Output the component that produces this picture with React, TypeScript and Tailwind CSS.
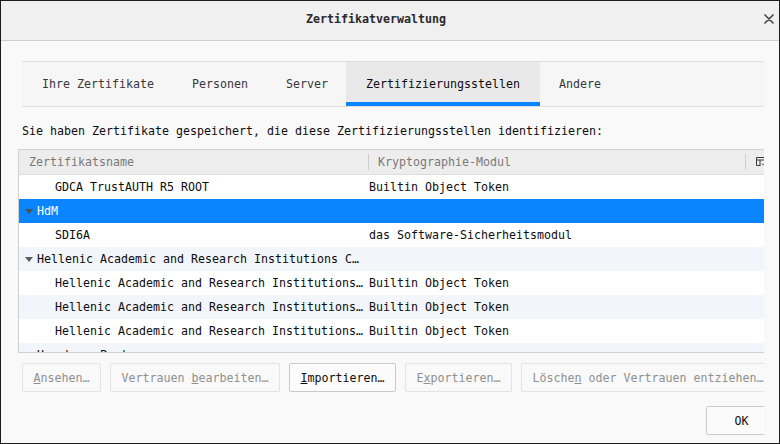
import type { ReactNode } from 'react';

type TreeRow = {
    name: string;
    module?: string;
    parent?: boolean;
    selected?: boolean;
};

const tabs = ['Ihre Zertifikate', 'Personen', 'Server', 'Zertifizierungsstellen', 'Andere'];

const rows: TreeRow[] = [
    { name: 'GDCA TrustAUTH R5 ROOT', module: 'Builtin Object Token' },
    { name: 'HdM', parent: true, selected: true },
    { name: 'SDI6A', module: 'das Software-Sicherheitsmodul' },
    { name: 'Hellenic Academic and Research Institutions C…', parent: true },
    { name: 'Hellenic Academic and Research Institutions…', module: 'Builtin Object Token' },
    { name: 'Hellenic Academic and Research Institutions…', module: 'Builtin Object Token' },
    { name: 'Hellenic Academic and Research Institutions…', module: 'Builtin Object Token' },
    { name: 'Hongkong Post', parent: true },
];

function Twisty({ light }: { light?: boolean }) {
    return (
        <svg width="8" height="5" viewBox="0 0 8 5" className="shrink-0">
            <path d="M0 0h8L4 5z" fill={light ? '#4f4f4f' : '#5c5c5c'} />
        </svg>
    );
}

function ColumnPicker() {
    return (
        <svg width="10" height="10" viewBox="0 0 10 10" fill="none" stroke="#3a3a3a" strokeWidth="1">
            <path d="M0.5 0.5h8v3" />
            <path d="M0.5 0.5v8h4" />
            <path d="M0.5 3h8" />
            <path d="M4 3v5.5" />
            <path d="M6 6.5l1.5 1.5 1.5-1.5" />
        </svg>
    );
}

function Button({ children, disabled, className = '' }: { children: ReactNode; disabled?: boolean; className?: string }) {
    return (
        <button
            className={
                'h-[29px] shrink-0 whitespace-nowrap rounded-[2px] border px-[10.5px] ' +
                (disabled
                    ? 'border-[#e3e3e3] bg-[#f9f9fa] text-[#8f8f8f]'
                    : 'border-[#cbcbcb] bg-[#fbfbfb] text-[#0c0c0d]') +
                ' ' +
                className
            }
        >
            {children}
        </button>
    );
}

export default function App() {
    return (
        <div
            className="flex h-[444px] w-[780px] flex-col border border-[#1c1c1c] bg-[#f9f9fa] text-[11.63px] leading-[14px] text-[#0c0c0d]"
            style={{ fontFamily: '"DejaVu Sans Mono", "Liberation Mono", monospace' }}
        >
            {/* Title bar */}
            <div className="flex h-[40px] shrink-0 border-b border-[#cdcdcd] bg-[#f0f0f0]">
                <div className="flex flex-1 items-center justify-center pb-[3px] font-bold text-[#2a2a2e]">
                    Zertifikatverwaltung
                </div>
                <div className="flex w-[28px] items-center justify-end pb-[3px] pr-[5px]">
                    <svg width="10" height="10" viewBox="0 0 10 10" stroke="#4a4a4f" strokeWidth="1.7" strokeLinecap="round">
                        <path d="M1 1l8 8M9 1l-8 8" />
                    </svg>
                </div>
            </div>

            {/* Content, clipped on the right */}
            <div className="w-[763px] flex-1 overflow-hidden pl-[17px]">
                {/* Tabs */}
                <div className="ml-[4px] mt-[20px] flex h-[46px] w-[800px] border-y border-[#dedede] bg-[#f6f6f6] pl-[1px]">
                    {tabs.map((tab) => {
                        const active = tab === 'Zertifizierungsstellen';
                        return (
                            <div
                                key={tab}
                                className={
                                    'relative flex items-center whitespace-nowrap px-[19px] ' +
                                    (active ? '-ml-px bg-[#e9e9e9] pl-[20px] pr-[20px] text-[#0c0c0d]' : 'text-[#38383d]')
                                }
                            >
                                {tab}
                                {active && <div className="absolute inset-x-0 bottom-0 h-[4px] bg-[#0a84ff]" />}
                            </div>
                        );
                    })}
                </div>

                <div className="ml-[4px] h-[42px] whitespace-nowrap pt-[17px]">
                    Sie haben Zertifikate gespeichert, die diese Zertifizierungsstellen identifizieren:
                </div>

                {/* Tree */}
                <div className="h-[204px] w-[800px] overflow-hidden border border-[#d0d0d0] bg-white">
                    <div className="grid h-[25px] grid-cols-[349px_377px_1fr] border-b border-[#dcdcdc] bg-[#ededed] text-[#7a7a7a]">
                        <div className="flex items-center pl-[10px]">Zertifikatsname</div>
                        <div className="flex items-center">
                            <div className="mr-[9px] h-[16px] w-px bg-[#cdcdcd]" />
                            Kryptographie-Modul
                        </div>
                        <div className="flex items-center">
                            <div className="mr-[10px] h-[16px] w-px bg-[#cdcdcd]" />
                            <ColumnPicker />
                        </div>
                    </div>
                    {rows.map((row, i) => (
                        <div
                            key={i}
                            className={
                                'grid h-[24px] grid-cols-[349px_377px_1fr] items-center whitespace-nowrap ' +
                                (row.selected ? 'bg-[#0a84ff] text-white' : i % 2 === 1 ? 'bg-[#f2f5f9]' : 'bg-white')
                            }
                        >
                            {row.parent ? (
                                <div className="flex items-center overflow-hidden pl-[6px]">
                                    <Twisty light={row.selected} />
                                    <span className="ml-[4px]">{row.name}</span>
                                </div>
                            ) : (
                                <div className="overflow-hidden pl-[36px]">{row.name}</div>
                            )}
                            <div className="pl-[1px]">{row.module ?? ''}</div>
                            <div />
                        </div>
                    ))}
                </div>

                {/* Actions */}
                <div className="ml-[4px] mt-[10px] flex gap-[9px]">
                    <Button disabled>
                        <u>A</u>nsehen…
                    </Button>
                    <Button disabled>
                        Vertrauen <u>b</u>earbeiten…
                    </Button>
                    <Button>
                        <u>I</u>mportieren…
                    </Button>
                    <Button disabled>
                        E<u>x</u>portieren…
                    </Button>
                    <Button disabled>
                        Lösche<u>n</u> oder Vertrauen entziehen…
                    </Button>
                </div>

                <div className="mt-[14px] flex pl-[688px]">
                    <Button className="w-[71px]">OK</Button>
                </div>
            </div>
        </div>
    );
}
